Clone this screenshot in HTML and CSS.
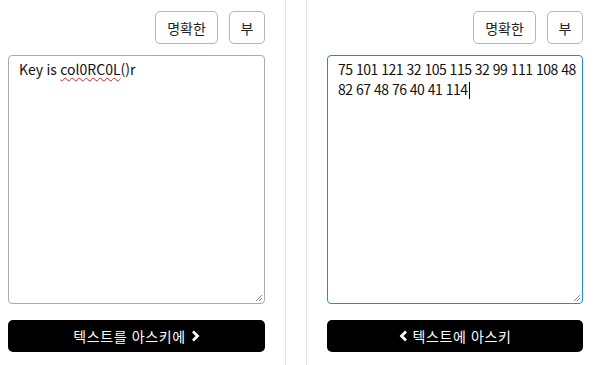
FILE: index.html
```
<!DOCTYPE html>
<html lang="ko">
<head>
  <meta charset="UTF-8" />
  <title>텍스트 아스키 변환</title>
  <link rel="stylesheet" href="styles.css">
</head>
<body>
  <div class="converter">
    <section class="pane pane-left">
      <div class="tools">
        <button class="tool-btn">명확한</button>
        <button class="tool-btn tool-small">부</button>
      </div>
      <div class="box">
        <span>Key is <span class="typo">col0RC0L</span>()r</span>
        <svg class="grip" width="9" height="9" viewBox="0 0 9 9"><path d="M8 2L2 8M8 5L5 8" stroke="#888" stroke-width="1"/></svg>
      </div>
      <button class="go-btn">텍스트를 아스키에
        <svg width="9" height="12" viewBox="0 0 9 12"><path d="M2 1.5L6.5 6L2 10.5" fill="none" stroke="#fff" stroke-width="2.8"/></svg>
      </button>
    </section>

    <section class="pane pane-right">
      <div class="tools">
        <button class="tool-btn">명확한</button>
        <button class="tool-btn tool-small">부</button>
      </div>
      <div class="box focused"><p class="box-text">75 101 121 32 105 115 32 99 111 108 48 82 67 48 76 40 41 114<span class="caret"></span></p><svg class="grip" width="9" height="9" viewBox="0 0 9 9"><path d="M8 2L2 8M8 5L5 8" stroke="#888" stroke-width="1"/></svg></div>
      <button class="go-btn">
        <svg width="9" height="12" viewBox="0 0 9 12"><path d="M7 1.5L2.5 6L7 10.5" fill="none" stroke="#fff" stroke-width="2.8"/></svg>
        텍스트에 아스키</button>
    </section>
  </div>
</body>
</html>
```

FILE: styles.css
```
* {
  box-sizing: border-box;
  margin: 0;
  padding: 0;
}

body {
  font-family: "Noto Sans CJK KR", "Noto Sans", sans-serif;
  font-size: 14px;
  color: #222;
  background: #fff;
}

.converter {
  display: flex;
  height: 365px;
}

.pane {
  display: flex;
  flex-direction: column;
  padding-top: 11px;
}

.pane-left {
  width: 286px;
  padding-left: 8px;
  padding-right: 20px;
  border-right: 1px solid #e6e6e6;
}

.pane-right {
  width: 277px;
  margin-left: 20px;
  padding-left: 20px;
  border-left: 1px solid #e6e6e6;
}

.tools {
  display: flex;
  justify-content: flex-end;
  gap: 11px;
  margin-bottom: 11px;
}

.tool-btn {
  font-family: inherit;
  font-size: 14px;
  color: #222;
  background: #fff;
  border: 1px solid #b5b5b5;
  border-radius: 5px;
  height: 33px;
  width: 63px;
  cursor: pointer;
}

.tool-small {
  width: 36px;
}

.box {
  position: relative;
  height: 249px;
  border: 1px solid #ababab;
  border-radius: 4px;
  padding: 3px 10px;
  line-height: 20px;
  color: #111;
  word-spacing: -0.5px;
}

/* digits come out wider than in the original, tighten them */
.box.focused {
  border-color: #1a8fd0;
  word-spacing: 0;
  letter-spacing: -0.5px;
  padding-right: 4px;
}

.typo {
  text-decoration: underline wavy #e0201c;
  text-decoration-thickness: 1px;
  text-underline-offset: 2px;
}

.caret {
  display: inline-block;
  width: 1px;
  height: 17px;
  background: #000;
  vertical-align: -4px;
  margin-left: 1px;
}

.grip {
  position: absolute;
  right: 1px;
  bottom: 1px;
}

.go-btn {
  margin-top: 16px;
  height: 32px;
  border: none;
  border-radius: 5px;
  background: #000;
  color: #fff;
  font-family: inherit;
  font-size: 14px;
  letter-spacing: 0.6px;
  display: flex;
  align-items: center;
  justify-content: center;
  gap: 5px;
  cursor: pointer;
}
```
